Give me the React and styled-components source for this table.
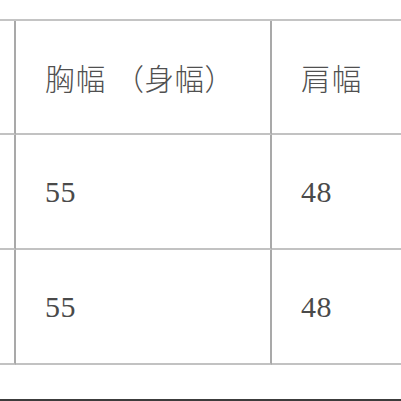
import styled, { createGlobalStyle } from 'styled-components';

const GlobalStyle = createGlobalStyle`
	html, body {
		margin: 0;
		padding: 0;
		background: #fff;
	}
`;

const Page = styled.div`
	width: 401px;
	height: 401px;
	overflow: hidden;
	background: #fff;
`;

const Table = styled.div`
	display: grid;
	grid-template-columns: 102px 256px 220px;
	grid-auto-rows: auto;
	width: 578px;
	margin-top: 19px;
	margin-left: -86px;
	border-top: 2px solid #c4c4c4;
`;

const Cell = styled.div`
	box-sizing: border-box;
	height: ${(p) => p.$height}px;
	display: flex;
	align-items: center;
	padding-left: 29px;
	border-right: 2px solid #a9a9a9;
	border-bottom: 2px solid #c2c2c2;
	font-family: "Liberation Serif", "Noto Sans CJK JP", serif;
	font-size: ${(p) => (p.$head ? 29.5 : 30)}px;
	font-weight: 300;
	color: ${(p) => (p.$head ? '#505050' : '#4a4a4a')};
	letter-spacing: ${(p) => (p.$head ? 1.2 : 0.5)}px;
	white-space: nowrap;
`;

// the bracketed part sits a little further out than the trimmed fallback gives
const Aside = styled.span`
	margin-left: 8px;
	letter-spacing: 0.5px;
`;

const rows = [
	{ height: 114, head: true, cells: ['', <>胸幅<Aside>（身幅）</Aside></>, '肩幅'] },
	{ height: 115, cells: ['', '55', '48'] },
	{ height: 115, cells: ['', '55', '48'] },
];

const Rule = styled.div`
	margin-top: 34px;
	height: 2px;
	background: #3c3c3c;
`;

export default function App() {
	return (
		<Page>
			<GlobalStyle />
			<Table>
				{rows.map((row, i) =>
					row.cells.map((text, j) => (
						<Cell key={`${i}-${j}`} $height={row.height} $head={row.head}>
							{text}
						</Cell>
					))
				)}
			</Table>
			<Rule />
		</Page>
	);
}
